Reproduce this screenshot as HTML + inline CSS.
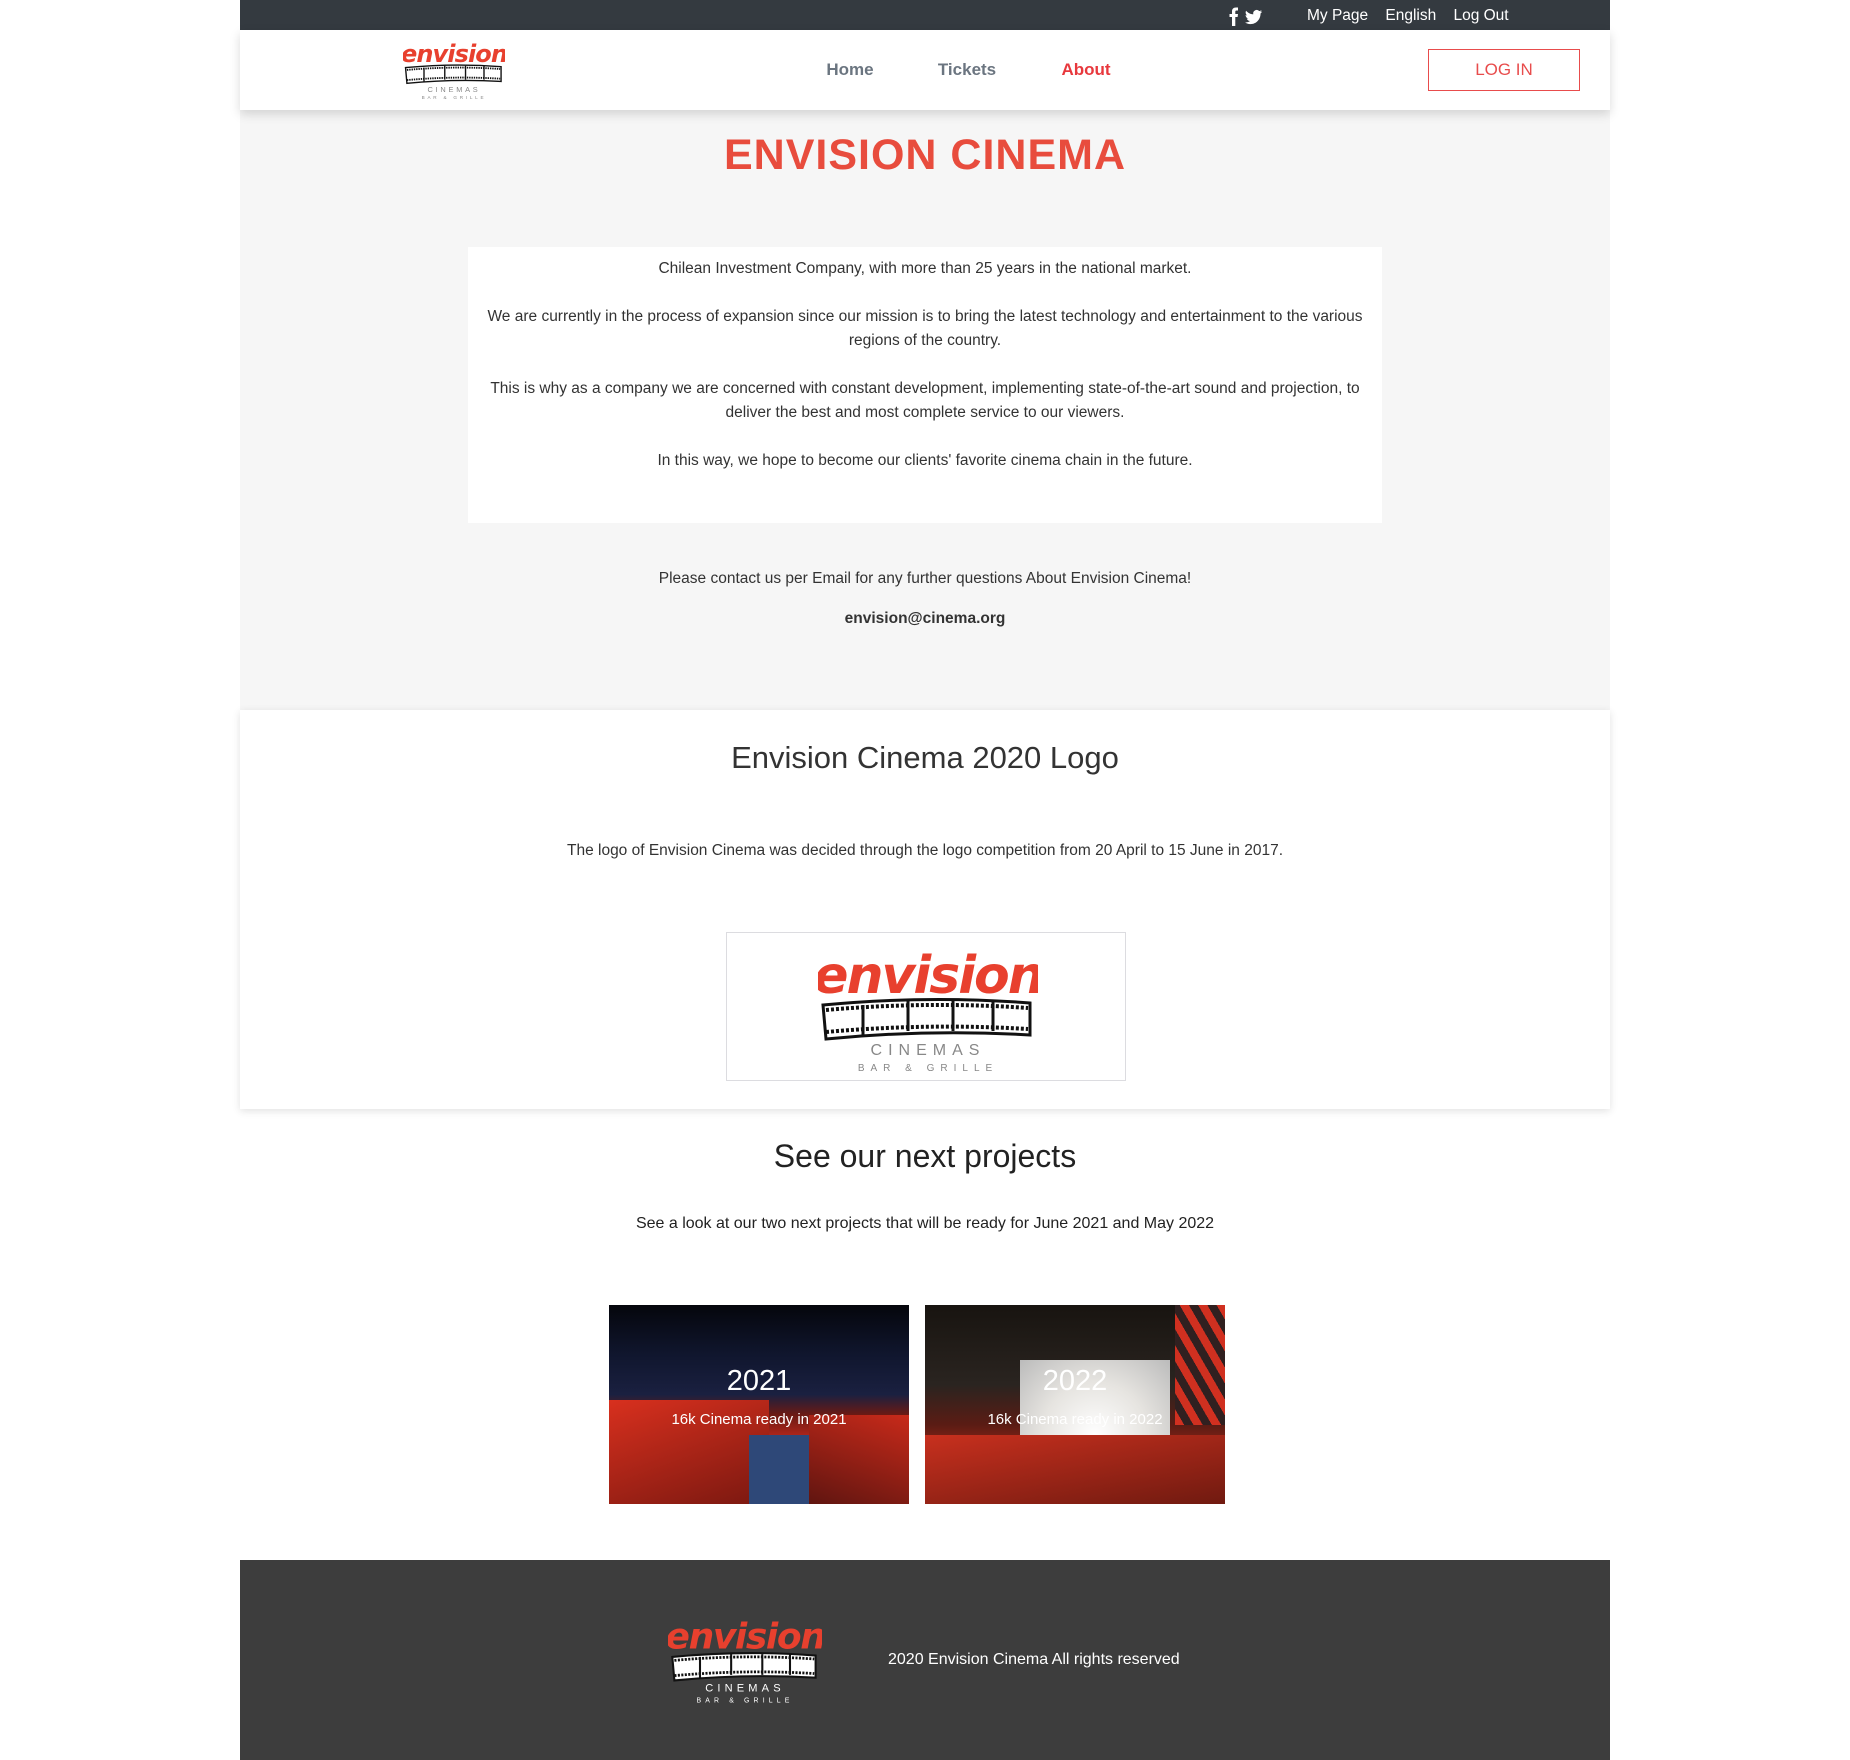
<!DOCTYPE html>
<html><head><meta charset="utf-8">
<style>
*{margin:0;padding:0;box-sizing:border-box}
body{width:1850px;height:1760px;background:#fff;font-family:"Liberation Sans",sans-serif;color:#333;position:relative;overflow:hidden}
.abs{position:absolute}
.c{text-align:center}
</style></head><body>
<div class="abs" style="left:240px;top:0;width:1370px;height:30px;background:#343a40"></div>
<svg class="abs" style="left:1226px;top:6px" width="40" height="20" viewBox="0 0 40 20">
<path d="M6 20V11H3.5V8H6V5.5C6 3 7.3 1.5 10 1.5H12V4.5H10.5C9.6 4.5 9.3 5 9.3 5.8V8H12L11.6 11H9.3V20Z" fill="#fff"/>
<path d="M36 5.5c-.6.3-1.3.5-2 .6.7-.4 1.3-1.1 1.5-1.9-.7.4-1.4.7-2.2.9a3.5 3.5 0 0 0-6 3.2c-2.9-.1-5.5-1.5-7.2-3.6-.9 1.6-.4 3.6 1.1 4.7-.6 0-1.1-.2-1.6-.4 0 1.7 1.2 3.2 2.8 3.5-.5.1-1.1.2-1.6.1.5 1.4 1.8 2.4 3.3 2.4A7 7 0 0 1 19 16.5c1.6 1 3.4 1.6 5.4 1.6 6.5 0 10.1-5.4 10.1-10.1v-.5c.6-.5 1.1-1.1 1.5-1.8z" fill="#fff"/>
</svg>
<div class="abs" style="left:1307px;top:7px;color:#fff;font-size:15.5px;white-space:nowrap">My Page&nbsp;&nbsp;&nbsp; English&nbsp;&nbsp;&nbsp; Log Out</div>
<div class="abs" style="left:240px;top:30px;width:1370px;height:80px;background:#fff;box-shadow:0 4px 10px rgba(0,0,0,.15);z-index:2">
 <svg class="abs" style="left:163px;top:9px" width="102" height="60" viewBox="0 0 220 130">
  <text x="110" y="50" text-anchor="middle" font-family="DejaVu Sans" font-style="italic" font-weight="bold" font-size="52" fill="#e8402e" letter-spacing="-2">envision</text>
  <path d="M5 62Q110 52 212 60V92Q110 86 8 96Z" fill="#fff" stroke="#111" stroke-width="3"/>
  <path d="M8 67Q110 58 210 65M8 89Q110 80 210 86" stroke="#111" stroke-width="4" stroke-dasharray="3 2" fill="none"/>
  <path d="M45 62V92M90 58V88M135 58V88M175 58V88" stroke="#111" stroke-width="3"/>
  <text x="110" y="115" text-anchor="middle" font-size="16" fill="#888" letter-spacing="6">CINEMAS</text>
  <text x="110" y="130" text-anchor="middle" font-size="10" fill="#888" letter-spacing="6">BAR &amp; GRILLE</text>
 </svg>
 <div class="abs" style="left:580px;top:30px;font-size:17px;font-weight:bold;color:#6b7580;width:60px;text-align:center">Home</div>
 <div class="abs" style="left:692px;top:30px;font-size:17px;font-weight:bold;color:#6b7580;width:70px;text-align:center">Tickets</div>
 <div class="abs" style="left:816px;top:30px;font-size:17px;font-weight:bold;color:#e8383d;width:60px;text-align:center">About</div>
 <div class="abs" style="left:1188px;top:19px;width:152px;height:42px;border:1.5px solid #e84c4c;color:#e84c4c;font-size:17px;text-align:center;line-height:39px">LOG IN</div>
</div>
<div class="abs" style="left:240px;top:110px;width:1370px;height:600px;background:#f6f6f6"></div>
<div class="abs c" style="left:240px;top:131px;width:1370px;font-size:43px;font-weight:bold;color:#e84c3d;letter-spacing:1px">ENVISION CINEMA</div>
<div class="abs c" style="left:468px;top:247px;width:914px;height:276px;background:#fff;font-size:15.5px;line-height:24px;color:#333;padding:10px 12px">
 <p>Chilean Investment Company, with more than 25 years in the national market.</p><br>
 <p>We are currently in the process of expansion since our mission is to bring the latest technology and entertainment to the various regions of the country.</p><br>
 <p>This is why as a company we are concerned with constant development, implementing state-of-the-art sound and projection, to deliver the best and most complete service to our viewers.</p><br>
 <p>In this way, we hope to become our clients' favorite cinema chain in the future.</p>
</div>
<div class="abs c" style="left:240px;top:570px;width:1370px;font-size:15.5px;color:#333">Please contact us per Email for any further questions About Envision Cinema!</div>
<div class="abs c" style="left:240px;top:610px;width:1370px;font-size:15.5px;font-weight:bold;color:#333">envision@cinema.org</div>
<div class="abs" style="left:240px;top:710px;width:1370px;height:399px;background:#fff;box-shadow:0 2px 8px rgba(0,0,0,.12);z-index:1">
 <div class="abs c" style="left:0;top:30px;width:1370px;font-size:31px;color:#333">Envision Cinema 2020 Logo</div>
 <div class="abs c" style="left:0;top:132px;width:1370px;font-size:15.5px;color:#333">The logo of Envision Cinema was decided through the logo competition from 20 April to 15 June in 2017.</div>
 <div class="abs" style="left:486px;top:222px;width:400px;height:149px;border:1px solid #dcdce0;background:#fff">
  <svg class="abs" style="left:91px;top:10px" width="220" height="130" viewBox="0 0 220 130">
  <text x="110" y="50" text-anchor="middle" font-family="DejaVu Sans" font-style="italic" font-weight="bold" font-size="52" fill="#e8402e" letter-spacing="-2">envision</text>
  <path d="M5 62Q110 52 212 60V92Q110 86 8 96Z" fill="#fff" stroke="#111" stroke-width="3"/>
  <path d="M8 67Q110 58 210 65M8 89Q110 80 210 86" stroke="#111" stroke-width="4" stroke-dasharray="3 2" fill="none"/>
  <path d="M45 62V92M90 58V88M135 58V88M175 58V88" stroke="#111" stroke-width="3"/>
  <text x="110" y="112" text-anchor="middle" font-size="16" fill="#888" letter-spacing="6">CINEMAS</text>
  <text x="110" y="128" text-anchor="middle" font-size="10" fill="#888" letter-spacing="6">BAR &amp; GRILLE</text>
  </svg>
 </div>
</div>
<div class="abs" style="left:240px;top:1109px;width:1370px;height:451px;background:#fff">
 <div class="abs c" style="left:0;top:29px;width:1370px;font-size:32px;color:#222">See our next projects</div>
 <div class="abs c" style="left:0;top:106px;width:1370px;font-size:16px;color:#222">See a look at our two next projects that will be ready for June 2021 and May 2022</div>
</div>
<div class="abs" style="left:609px;top:1305px;width:300px;height:199px;overflow:hidden;background:linear-gradient(180deg,#05060c 0%,#10162e 25%,#1a2040 45%,#6a1a14 55%,#c8291c 70%,#3a4a70 85%,#8a2418 100%)">
 <div class="abs" style="left:0;top:95px;width:160px;height:104px;background:linear-gradient(160deg,#d8301e,#7a1810)"></div>
 <div class="abs" style="left:200px;top:110px;width:100px;height:89px;background:linear-gradient(200deg,#c82a1a,#601510)"></div>
 <div class="abs" style="left:140px;top:130px;width:60px;height:69px;background:#2e4878"></div>
 <div class="abs c" style="left:0;top:60px;width:300px;font-size:29px;color:#fff">2021</div>
 <div class="abs c" style="left:0;top:106px;width:300px;font-size:15px;color:#fff">16k Cinema ready in 2021</div>
</div>
<div class="abs" style="left:925px;top:1305px;width:300px;height:199px;overflow:hidden;background:linear-gradient(180deg,#181410 0%,#2a2420 40%,#5a1c14 60%,#b02818 80%,#501410 100%)">
 <div class="abs" style="left:95px;top:55px;width:150px;height:95px;background:radial-gradient(ellipse at 50% 80%,#fff 0%,#e6e4e0 50%,#bbb 100%)"></div>
 <div class="abs" style="left:250px;top:0;width:50px;height:120px;background:repeating-linear-gradient(60deg,#d03020 0 8px,#302020 8px 16px)"></div>
 <div class="abs" style="left:0;top:130px;width:300px;height:69px;background:linear-gradient(170deg,#c8301e,#701a10)"></div>
 <div class="abs c" style="left:0;top:60px;width:300px;font-size:29px;color:#fff">2022</div>
 <div class="abs c" style="left:0;top:106px;width:300px;font-size:15px;color:#fff">16k Cinema ready in 2022</div>
</div>
<div class="abs" style="left:240px;top:1560px;width:1370px;height:200px;background:#3d3d3d">
 <svg class="abs" style="left:428px;top:54px" width="154" height="90" viewBox="0 0 220 130">
  <text x="110" y="50" text-anchor="middle" font-family="DejaVu Sans" font-style="italic" font-weight="bold" font-size="52" fill="#e8402e" letter-spacing="-2">envision</text>
  <path d="M5 62Q110 52 212 60V92Q110 86 8 96Z" fill="#fff" stroke="#111" stroke-width="3"/>
  <path d="M8 67Q110 58 210 65M8 89Q110 80 210 86" stroke="#111" stroke-width="4" stroke-dasharray="3 2" fill="none"/>
  <path d="M45 62V92M90 58V88M135 58V88M175 58V88" stroke="#111" stroke-width="3"/>
  <text x="110" y="112" text-anchor="middle" font-size="16" fill="#fff" letter-spacing="6">CINEMAS</text>
  <text x="110" y="128" text-anchor="middle" font-size="10" fill="#fff" letter-spacing="6">BAR &amp; GRILLE</text>
 </svg>
 <div class="abs" style="left:648px;top:91px;font-size:16px;color:#fff;white-space:nowrap">2020 Envision Cinema All rights reserved</div>
</div>
</body></html>
